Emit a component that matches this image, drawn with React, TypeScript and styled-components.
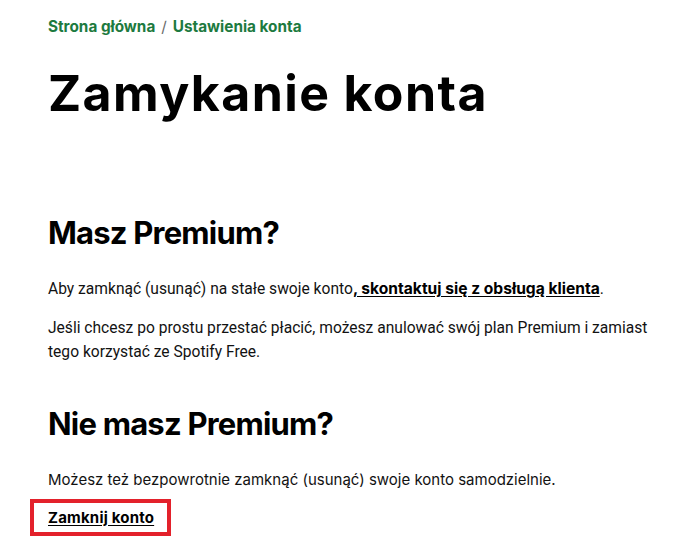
import React from 'react'
import styled, { createGlobalStyle } from 'styled-components'

const GlobalStyle = createGlobalStyle`
  body {
    margin: 0;
    background: #ffffff;
    color: #000000;
    font-family: Inter, "Noto Sans", sans-serif;
  }
`

const Page = styled.main`
  padding: 16px 0 0 48px;
  display: flex;
  flex-direction: column;
  align-items: flex-start;
`

const Breadcrumb = styled.nav`
  display: flex;
  align-items: center;
  gap: 6px;
  font-size: 15.3px;
  line-height: 20px;
  font-weight: 700;
  color: #1d7a40;
  margin-top: 1px;
`

const Crumb = styled.a`
  color: inherit;
  text-decoration: none;
`

const Separator = styled.span`
  color: #6a6a6a;
  font-weight: 400;
`

const Title = styled.h1`
  margin: 26px 0 0;
  font-size: 50px;
  line-height: 1.21;
  font-weight: 700;
  letter-spacing: 1.4px;
`

const SectionTitle = styled.h2<{ $gap: number }>`
  margin: ${(p) => p.$gap}px 0 0;
  font-size: 31px;
  line-height: 1.21;
  font-weight: 700;
  letter-spacing: -0.8px;
`

const Paragraph = styled.p<{ $gap: number; $alt?: boolean }>`
  margin: ${(p) => p.$gap}px 0 0;
  max-width: 625px;
  font-family: ${(p) => (p.$alt ? 'Inter, "Noto Sans", sans-serif' : 'Roboto, "Liberation Sans", sans-serif')};
  font-size: ${(p) => (p.$alt ? 15 : 15.6)}px;
  line-height: 24px;
  color: #121212;
`

const TextLink = styled.a`
  font-family: Inter, "Noto Sans", sans-serif;
  font-weight: 700;
  color: #000000;
  text-decoration: underline;
  text-underline-offset: 2px;
`

const Highlight = styled.div`
  margin-top: 7px;
  margin-left: -18px;
  border: 4px solid #e3212b;
  padding: 5px 13px 5px 14px;
  font-size: 15px;
  letter-spacing: 0.2px;
`

export default function App() {
  return (
    <>
      <GlobalStyle />
      <Page>
        <Breadcrumb>
          <Crumb href="#">Strona główna</Crumb>
          <Separator>/</Separator>
          <Crumb href="#">Ustawienia konta</Crumb>
        </Breadcrumb>

        <Title>Zamykanie konta</Title>

        <SectionTitle $gap={90}>Masz Premium?</SectionTitle>
        <Paragraph $gap={26}>
          Aby zamknąć (usunąć) na stałe swoje konto
          <TextLink href="#">, skontaktuj się z obsługą klienta</TextLink>.
        </Paragraph>
        <Paragraph $gap={15}>
          Jeśli chcesz po prostu przestać płacić, możesz anulować swój plan Premium i zamiast
          tego korzystać ze Spotify Free.
        </Paragraph>

        <SectionTitle $gap={41}>Nie masz Premium?</SectionTitle>
        <Paragraph $gap={25} $alt>
          Możesz też bezpowrotnie zamknąć (usunąć) swoje konto samodzielnie.
        </Paragraph>

        <Highlight>
          <TextLink href="#">Zamknij konto</TextLink>
        </Highlight>
      </Page>
    </>
  )
}
